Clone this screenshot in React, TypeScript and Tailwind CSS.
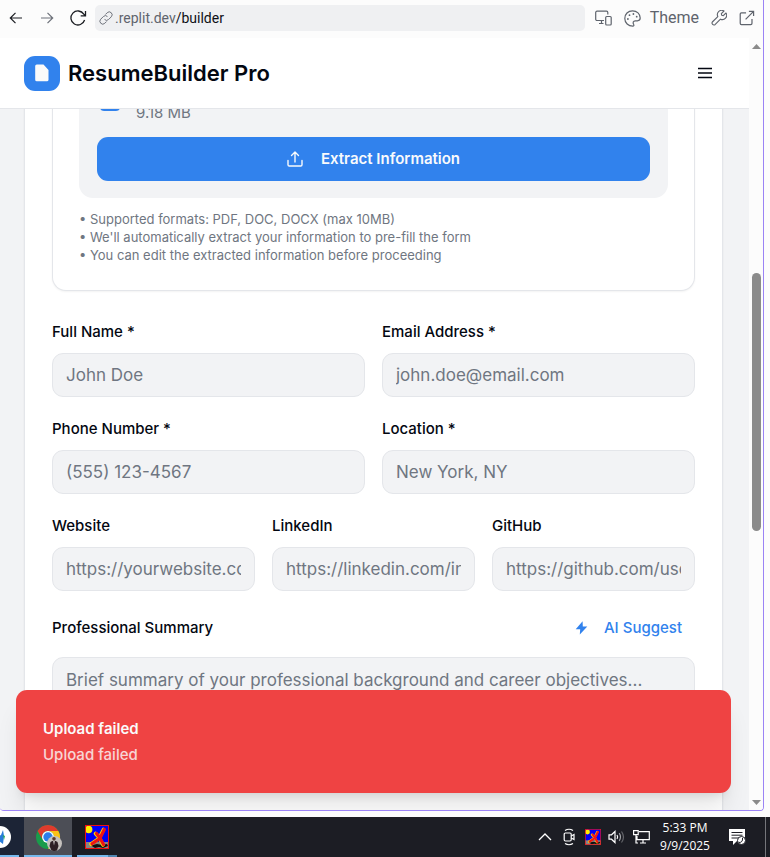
import type { ReactNode } from "react";

type FieldProps = { id: string; label: string; placeholder: string; type?: string };

function Field({ id, label, placeholder, type = "text" }: FieldProps) {
  return (
    <div className="flex min-w-0 flex-col gap-[9px]">
      <label htmlFor={id} className="text-[15px] leading-6 font-medium text-[#030711]">
        {label}
      </label>
      <input
        id={id}
        type={type}
        placeholder={placeholder}
        className="h-11 w-full rounded-[11px] border border-[#e4e6ea] bg-[#f2f3f5] px-[13px] text-[17px] text-gray-900 outline-none placeholder:text-[#6f7681]"
      />
    </div>
  );
}

function IconButton({ label, children }: { label: string; children: ReactNode }) {
  return (
    <button type="button" aria-label={label} className="flex shrink-0 items-center justify-center">
      {children}
    </button>
  );
}

function BrowserBar() {
  return (
    <div className="flex h-[38px] shrink-0 items-center bg-[#fcfcfc] pr-2 pb-[2px] pl-2">
      <IconButton label="Back">
        <svg width="16" height="16" viewBox="0 0 16 16" fill="none" stroke="#1b1d22" strokeWidth="1.2">
          <path d="M14 8H2.700M7.500 2.800 2.300 8l5.200 5.200" />
        </svg>
      </IconButton>
      <div className="ml-[15px] flex">
        <IconButton label="Forward">
          <svg width="16" height="16" viewBox="0 0 16 16" fill="none" stroke="#6d717a" strokeWidth="1.2">
            <path d="M2 8h11.300M8.500 2.800 13.700 8l-5.200 5.200" />
          </svg>
        </IconButton>
      </div>
      <div className="ml-[14px] flex">
        <IconButton label="Reload">
          <svg width="18" height="18" viewBox="0 0 18 18" fill="none" stroke="#1b1d22" strokeWidth="1.3">
            <path d="M15.600 11A7 7 0 1 1 14.800 5.200L16.300 6.700M16.500 2v4.800h-4.800" />
          </svg>
        </IconButton>
      </div>
      <div className="ml-2 flex h-[26px] min-w-0 flex-1 items-center gap-[2px] rounded-[5px] bg-[#eff0f2] px-1 font-[Roboto,sans-serif] text-[14px]">
        <svg width="14" height="14" viewBox="0 0 24 24" fill="none" stroke="#6d717a" strokeWidth="1.700">
          <path d="M14.500 9.500a5 5 0 0 0-7 0l-4.500 4.500a4.900 4.900 0 0 0 7 7l3-3M9.500 14.500a5 5 0 0 0 7 0l4.500-4.500a4.900 4.900 0 0 0-7-7l-3 3" />
        </svg>
        <span className="text-[#5f646d]">
          .replit.dev<span className="text-[#0e1016]">/builder</span>
        </span>
      </div>
      <div className="ml-[10px] flex items-center text-[#5f646d]">
        <IconButton label="Devices">
          <svg width="17" height="16" viewBox="0 0 17 16" fill="none" stroke="currentColor" strokeWidth="1.2">
            <path d="M9 10.500H2A1.300 1.300 0 0 1 .7 9.200V2.500A1.300 1.300 0 0 1 2 1.200h9.500a1.300 1.300 0 0 1 1.300 1.300V4.500M6.500 10.500v3M4 13.500h4.500" />
            <rect x="10.700" y="6.500" width="5.500" height="8.500" rx="1" />
          </svg>
        </IconButton>
        <button type="button" className="ml-3 flex items-center gap-[9px] font-[Roboto,sans-serif] text-[16px] leading-5">
          <svg width="17" height="17" viewBox="0 0 17 17" fill="none" stroke="currentColor" strokeWidth="1.200">
            <path d="M8.500.8C4 .8.8 4.200.8 8.400c0 4.400 3.600 7.800 7.900 7.800 1.300 0 1.500-1 .9-1.900-1-1.600-.4-3.500 1.600-3.500h2.200c1.800 0 2.800-1 2.800-2.700C16.200 3.900 13 .8 8.500.8Z" />
            <g fill="currentColor" stroke="none">
              <circle cx="3.900" cy="9" r=".9" /><circle cx="5.500" cy="5.200" r=".9" /><circle cx="9.400" cy="4" r=".9" /><circle cx="12.700" cy="6.700" r=".9" />
            </g>
          </svg>
          Theme
        </button>
        <div className="ml-3 flex">
          <IconButton label="Tools">
            <svg width="16" height="16" viewBox="0 0 24 24" fill="none" stroke="currentColor" strokeWidth="1.700" strokeLinejoin="round">
              <path d="m15.500 5.500 4-4a6.500 6.500 0 0 0-9.300 8.300L2 18a2.900 2.900 0 0 0 4 4l8.200-8.200a6.500 6.500 0 0 0 8.300-9.300l-4 4-2.400-.6z" />
            </svg>
          </IconButton>
        </div>
        <div className="ml-3 flex">
          <IconButton label="Open in new tab">
            <svg width="16" height="16" viewBox="0 0 17 17" fill="none" stroke="currentColor" strokeWidth="1.300">
              <path d="M7.500 3H2.600A1.300 1.300 0 0 0 1.300 4.300v9.900a1.300 1.300 0 0 0 1.300 1.300h9.900a1.300 1.300 0 0 0 1.300-1.300V9.500M10.500 1.500h5v5M15.500 1.500 7 10" />
            </svg>
          </IconButton>
        </div>
      </div>
    </div>
  );
}

function AppHeader() {
  return (
    <header className="flex h-[71px] shrink-0 items-center justify-between border-b border-[#e4e6ea] bg-white pr-9 pl-6">
      <div className="flex items-center gap-2">
        <div className="flex h-[35px] w-9 items-center justify-center rounded-[11px] bg-[#3182ed]">
          <svg width="14" height="18" viewBox="0 0 14 18" fill="#fafafa">
            <path d="M1.800.5h6.700L13.500 6v9.700a1.600 1.600 0 0 1-1.600 1.600H1.800A1.600 1.600 0 0 1 .2 15.700V2.100A1.600 1.600 0 0 1 1.800.5Z" />
          </svg>
        </div>
        <h1 className="text-[22px] leading-8 font-semibold text-[#030711]">ResumeBuilder Pro</h1>
      </div>
      <IconButton label="Menu">
        <svg width="16" height="16" viewBox="0 0 16 16" fill="none" stroke="#030711" strokeWidth="1.600">
          <path d="M1 3.500h14M1 8h14M1 12.500h14" />
        </svg>
      </IconButton>
    </header>
  );
}

function UploadCard() {
  return (
    <section className="rounded-b-[14px] border border-t-0 border-[#e4e6ea] bg-white px-[26px] pb-[26px] shadow-xs">
      <div className="rounded-b-[14px] bg-[#f2f3f5] px-[18px] pb-[17px]">
        <div className="flex items-start gap-4 pb-3 pl-[3px]">
          <div className="h-[10px] w-5 rounded-b-[4px] bg-[#3182ed]" />
          <p className="text-[15px] leading-6 text-[#6f7681]">9.18 MB</p>
        </div>
        <button
          type="button"
          className="flex h-11 w-full items-center justify-center gap-[18px] rounded-[11px] bg-[#3182ed] text-[15px] font-semibold text-[#f8fafc]"
        >
          <svg width="16" height="16" viewBox="0 0 16 16" fill="none" stroke="currentColor" strokeWidth="1.400" strokeLinecap="round" strokeLinejoin="round">
            <path d="M1 9.500v4.200a1.300 1.300 0 0 0 1.300 1.300h11.400a1.300 1.300 0 0 0 1.300-1.300V9.500M8 11V1.200M4.500 4.500 8 1l3.500 3.500" />
          </svg>
          Extract Information
        </button>
      </div>
      <div className="pt-3 text-[13px] leading-[18px] text-[#6f7681]">
        <p>• Supported formats: PDF, DOC, DOCX (max 10MB)</p>
        <p>• We'll automatically extract your information to pre-fill the form</p>
        <p>• You can edit the extracted information before proceeding</p>
      </div>
    </section>
  );
}

function ResumeForm() {
  return (
    <form className="mt-[29px] flex flex-col">
      <div className="grid grid-cols-2 gap-x-[17px] gap-y-5">
        <Field id="name" label="Full Name *" placeholder="John Doe" />
        <Field id="email" type="email" label="Email Address *" placeholder="john.doe@email.com" />
        <Field id="phone" type="tel" label="Phone Number *" placeholder="(555) 123-4567" />
        <Field id="location" label="Location *" placeholder="New York, NY" />
      </div>
      <div className="mt-5 grid grid-cols-3 gap-[17px]">
        <Field id="website" label="Website" placeholder="https://yourwebsite.com" />
        <Field id="linkedin" label="LinkedIn" placeholder="https://linkedin.com/in/username" />
        <Field id="github" label="GitHub" placeholder="https://github.com/username" />
      </div>
      <div className="mt-[17px] flex h-10 items-center justify-between">
        <label htmlFor="summary" className="text-[15px] leading-6 font-medium text-[#030711]">
          Professional Summary
        </label>
        <button type="button" className="flex items-center gap-4 pr-[13px] text-[15px] leading-6 font-medium text-[#3182ed]">
          <svg width="13" height="14" viewBox="0 0 13 14" fill="currentColor">
            <path d="M7.600.3.700 8.300h4.500L4.800 13.600 12.300 5.400H7.800Z" />
          </svg>
          AI Suggest
        </button>
      </div>
      <textarea
        id="summary"
        placeholder="Brief summary of your professional background and career objectives..."
        className="mt-[9px] h-[120px] w-full resize-none rounded-[11px] border border-[#e4e6ea] bg-[#f2f3f5] px-[13px] py-2 text-[17px] leading-7 outline-none placeholder:text-[#6f7681]"
      />
    </form>
  );
}

function Toast() {
  return (
    <div role="alert" className="absolute right-[18px] bottom-[17px] left-4 flex flex-col gap-[2px] rounded-[11px] bg-[#ef4343] px-[27px] pt-[27px] pb-[26px] text-[15px] leading-6 text-[#fafafa] shadow-xl">
      <p className="font-semibold">Upload failed</p>
      <p className="font-medium opacity-80">Upload failed</p>
    </div>
  );
}

function Scrollbar() {
  return (
    <div className="flex w-[14px] shrink-0 flex-col items-center bg-[#fcfcfc] pt-[6px] pb-[5px]">
      <svg width="9" height="5" viewBox="0 0 9 5" fill="#8b8b8b"><path d="M0 5 4.500 0 9 5Z" /></svg>
      <div className="mt-[224px] h-[258px] w-[9px] rounded-full bg-[#8b8b8b]" />
      <svg className="mt-auto" width="9" height="5" viewBox="0 0 9 5" fill="#8b8b8b"><path d="M0 0 4.500 5 9 0Z" /></svg>
    </div>
  );
}

function RunnerIcon({ size }: { size: number }) {
  return (
    <svg width={size} height={size} viewBox="0 0 24 24">
      <rect width="24" height="24" fill="#0000f5" />
      <path d="M0 17h24v7H0Z" fill="#858585" />
      <path d="M6 20.500 12 19l5 1 5-1 1 2-5 2-4-1-4 1Z" fill="#101010" />
      <circle cx="3.700" cy="4.500" r="3.700" fill="#ffee00" />
      <path d="M18.500 4.500 14 13.500 6 19M10.500 8.500l4 4.500 3.500 7" fill="none" stroke="#ffe000" strokeWidth="3.600" strokeLinecap="round" strokeLinejoin="round" />
      <path d="M19.300 4.500 14.800 13.500 7 18.800M11.500 8.500l3.500 4.500 3.500 6.500" fill="none" stroke="#f01414" strokeWidth="3.200" strokeLinecap="round" strokeLinejoin="round" />
      <rect x=".5" y=".5" width="23" height="23" fill="none" stroke="#f01010" />
    </svg>
  );
}

function ChromeIcon() {
  return (
    <svg width="26" height="26" viewBox="0 0 26 26">
      <circle cx="12" cy="12" r="12" fill="#1a9b4b" />
      <path d="M12 0a12 12 0 0 1 10.400 6H12a6 6 0 0 0-5.200 9L1.600 6A12 12 0 0 1 12 0Z" fill="#e03b2d" />
      <path d="M22.400 6A12 12 0 0 1 12 24l5.200-9A6 6 0 0 0 12 6Z" fill="#fbc116" />
      <circle cx="12" cy="12" r="6" fill="#fff" />
      <circle cx="12" cy="12" r="4.700" fill="#2b7de9" />
      <circle cx="18.500" cy="18.500" r="7.500" fill="#c5c1bd" />
      <circle cx="18" cy="13.800" r="1.800" fill="#5b3a2e" />
      <path d="M14.500 17q3.500-2.500 7 0l1 4-1.500 4.500a7.500 7.500 0 0 1-5.500 0L13.500 21Z" fill="#2e2025" />
      <path d="m17.300 16 .7 4.500.7-4.500Z" fill="#f3eeee" />
    </svg>
  );
}

function Taskbar() {
  return (
    <footer className="flex h-10 shrink-0 items-stretch bg-[#1c1d24] font-['Open_Sans',sans-serif] text-white">
      <button type="button" aria-label="Browser" className="flex w-[19px] flex-col justify-between bg-[#1c2436]">
        <svg className="mt-2" width="12" height="24" viewBox="0 0 12 24">
          <circle cx="0" cy="12" r="11" fill="#fff" />
          <path d="m-6 13 7-3 2-5 1 6-1 8-4-3-5 2Z" fill="#287bd8" />
          <path d="m3 10 2 1-1 4Z" fill="#27a85a" />
        </svg>
        <span className="h-[2px] bg-[#76b9ed]" />
      </button>
      <div className="w-[5px] bg-[#1c2436]" />
      <button type="button" aria-label="Chrome" className="flex w-12 flex-col items-center justify-between bg-[#4c4e56] pt-2 pl-[2px]">
        <ChromeIcon />
        <span className="-ml-[2px] h-[2px] w-12 bg-[#76b9ed]" />
      </button>
      <button type="button" aria-label="Runner" className="ml-[5px] flex w-10 flex-col items-center justify-between pt-2">
        <RunnerIcon size={24} />
        <span className="flex h-[2px] w-full bg-[#76b9ed]">
          <span className="ml-auto w-[9px] bg-[#5187b2]" />
        </span>
      </button>
      <div className="ml-auto flex items-center">
        <svg width="14" height="14" viewBox="0 0 14 14" fill="none" stroke="#fff" strokeWidth="1.300"><path d="m1 10 6-6 6 6" /></svg>
        <svg className="ml-[11px]" width="12" height="18" viewBox="0 0 12 18" fill="none" stroke="#fff" strokeWidth="1.200">
          <rect x="1.200" y="5" width="7" height="8" rx="1.200" />
          <path d="m8.200 8 2.800-1.500v5L8.200 10M2 2.500q4-2.500 8 0M2 15.500q4 2.500 8 0" />
        </svg>
        <div className="ml-[10px]"><RunnerIcon size={16} /></div>
        <svg className="ml-[7px]" width="17" height="14" viewBox="0 0 17 14" fill="none" stroke="#fff" strokeWidth="1.200">
          <path d="M1 4.800h2.500L7 1.500v11L3.500 9.200H1Z" />
          <path d="M9 5q1.300 2 0 4" />
          <path d="M11.200 3.200q2.600 3.800 0 7.600" stroke="#a0a1a5" />
          <path d="M13.500 1.500q4 5.500 0 11" stroke="#65666c" />
        </svg>
        <svg className="ml-2" width="17" height="14" viewBox="0 0 17 14" fill="none" stroke="#fff" strokeWidth="1.200">
          <path d="M6 1.700h10.300v8H4V6M10 9.700v3.200M7 13h6M.6.600h4.600v4H.6ZM3 4.600V13h2" />
        </svg>
        <div className="ml-2 w-[54px] text-center text-[12px] leading-[18px] whitespace-nowrap">
          <p>5:33 PM</p>
          <p>9/9/2025</p>
        </div>
        <svg className="ml-4" width="18" height="18" viewBox="0 0 18 18">
          <path d="M1 1h16v12H9l-4 4v-4H1Z" fill="#fff" />
          <path d="M3.500 4.500h11M3.500 7.200h11M3.500 10h7" stroke="#1c1d24" strokeWidth="1" />
          <circle cx="13.500" cy="12.500" r="4" fill="#fff" stroke="#1c1d24" />
          <path d="M11 14.500q4 0 3.500-4.500" stroke="#1c1d24" fill="none" />
        </svg>
        <span className="ml-[19px] h-10 w-px bg-[#75767b]" />
        <span className="w-1" />
      </div>
    </footer>
  );
}

export default function App() {
  return (
    <div className="flex h-screen flex-col overflow-hidden bg-[#fcfcfc] font-[Inter,sans-serif]">
      <div className="mr-[6px] mb-[6px] flex min-h-0 flex-1 flex-col overflow-hidden rounded-b-[4px] border-r border-b border-[#9b83f5]">
        <BrowserBar />
        <div className="flex min-h-0 flex-1">
          <div className="relative flex min-w-0 flex-1 flex-col overflow-hidden bg-[#f2f3f5]">
            <AppHeader />
            <main className="min-h-0 flex-1 overflow-hidden pr-[26px] pl-6">
              <div className="-mt-2 min-h-full border-x border-[#e4e6ea] bg-white px-[27px] pb-12 shadow-xs">
                <UploadCard />
                <ResumeForm />
              </div>
            </main>
            <Toast />
          </div>
          <Scrollbar />
        </div>
      </div>
      <Taskbar />
    </div>
  );
}
